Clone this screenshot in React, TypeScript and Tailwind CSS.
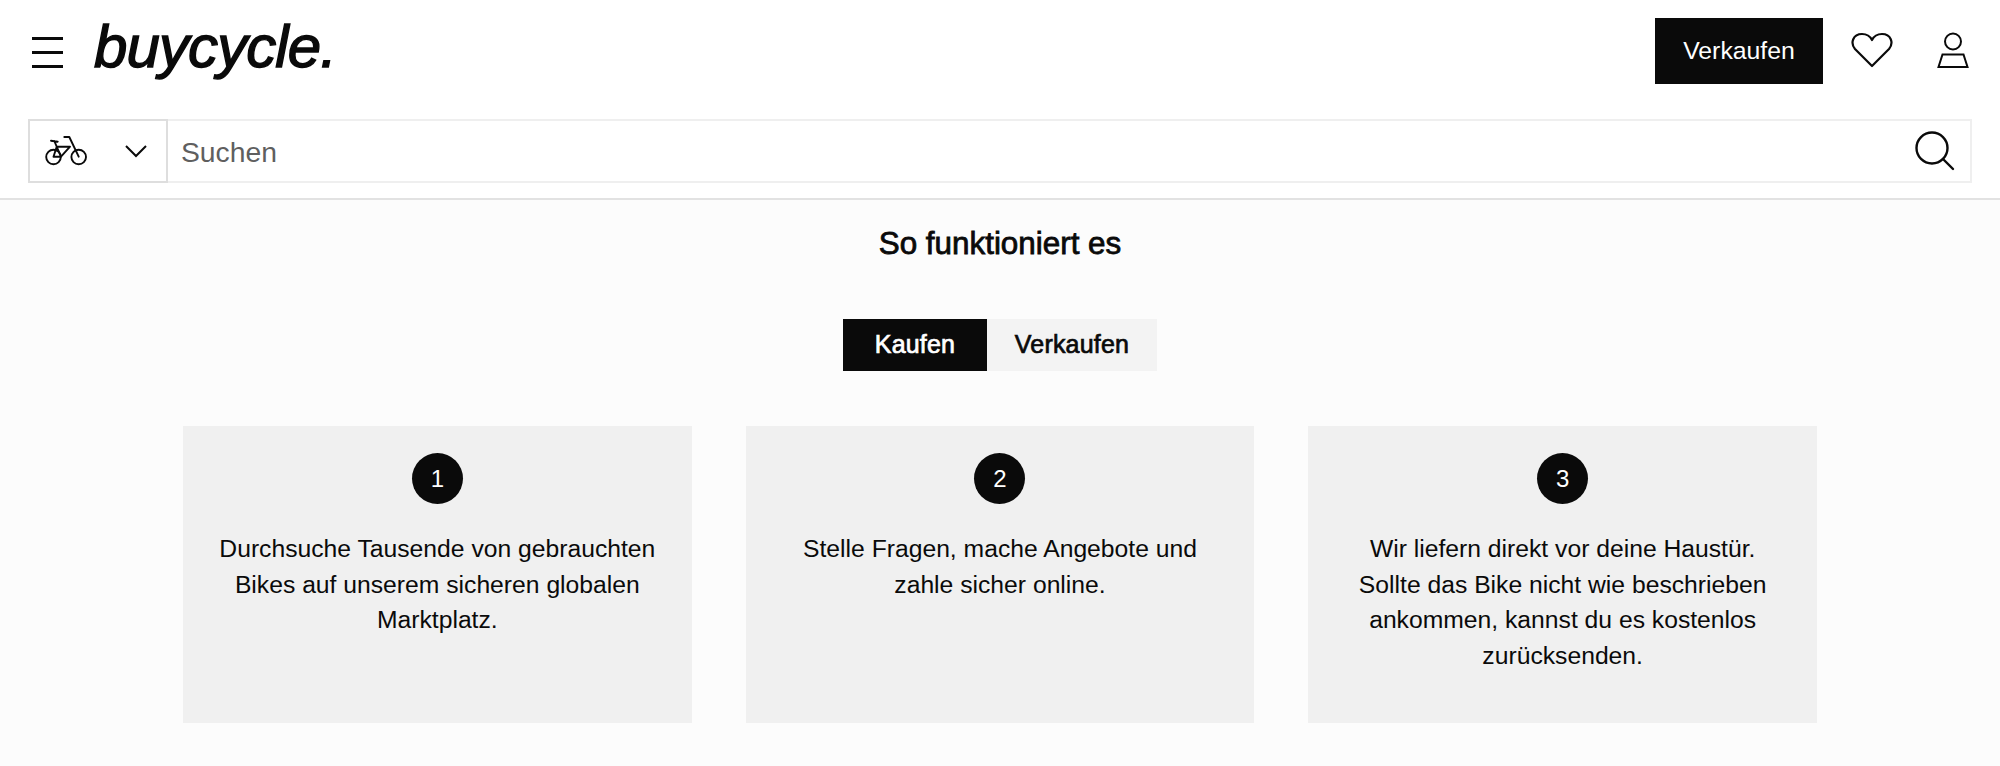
const steps = [
  { n: 1, text: "Durchsuche Tausende von gebrauchten Bikes auf unserem sicheren globalen Marktplatz." },
  { n: 2, text: "Stelle Fragen, mache Angebote und zahle sicher online." },
  { n: 3, text: "Wir liefern direkt vor deine Haustür. Sollte das Bike nicht wie beschrieben ankommen, kannst du es kostenlos zurücksenden." },
];

function BikeIcon() {
  return (
    <svg width="42" height="30" viewBox="0 0 42 30" fill="none" stroke="#0a0a0a" strokeWidth="1.9" strokeLinecap="round" strokeLinejoin="round">
      <circle cx="8.5" cy="21" r="7.3" />
      <circle cx="33.7" cy="21" r="7.3" />
      <path d="M19.3 1 H24.3 L33.7 20.7 M11.7 10.7 H25 L16 20.7 H8.5 L11.7 10.7 M6 4.7 L12.7 5.7 M9.3 5 L16 20.7" />
    </svg>
  );
}

function HeartIcon() {
  return (
    <svg width="42" height="36" viewBox="0 0 42 36" fill="none" stroke="#0a0a0a" strokeWidth="2.2" strokeLinejoin="round">
      <path d="M21 34 L4 17 C-1 11 2 2 11 2 C15.5 2 19 4 21 8 C23 4 26.5 2 31 2 C40 2 43 11 38 17 Z" />
    </svg>
  );
}

function UserIcon() {
  return (
    <svg width="32" height="37" viewBox="0 0 32 37" fill="none" stroke="#0a0a0a" strokeWidth="2">
      <circle cx="16" cy="9.5" r="8" />
      <path d="M5.5 22.5 H26.5 L30.5 35 H1.5 Z" />
    </svg>
  );
}

function SearchIcon() {
  return (
    <svg width="42" height="42" viewBox="0 0 42 42" fill="none" stroke="#0a0a0a" strokeWidth="2.4" strokeLinecap="round">
      <circle cx="18" cy="18" r="15.5" />
      <path d="M29 29 L39 39" />
    </svg>
  );
}

export default function App() {
  return (
    <div className="min-h-[766px] bg-[#fcfcfc] font-['Liberation_Sans',Arial,sans-serif] text-[#0a0a0a]">
      <header className="h-[200px] border-b-2 border-[#e2e2e2] bg-white">
        <div className="flex h-[119px] items-start pl-8 pr-[31px]">
          <div className="mt-[37px] flex h-[31px] w-[31px] flex-col justify-between">
            <span className="h-[3px] bg-[#0a0a0a]" />
            <span className="h-[3px] bg-[#0a0a0a]" />
            <span className="h-[3px] bg-[#0a0a0a]" />
          </div>
          <div className="ml-[31px] mt-[14px] text-[60px] leading-[66px] italic tracking-[-0.9px] [-webkit-text-stroke:1.4px_#0a0a0a]">
            buycycle.
          </div>
          <div className="ml-auto mt-[18px] flex items-start">
            <button className="flex h-[66px] w-[168px] items-center justify-center bg-[#0a0a0a] text-[24.8px] text-white">
              Verkaufen
            </button>
            <div className="ml-[28px] mt-[14px]">
              <HeartIcon />
            </div>
            <div className="ml-[44px] mt-[14px]">
              <UserIcon />
            </div>
          </div>
        </div>
        <div className="mx-[28px] flex h-[64px] bg-white">
          <div className="flex w-[140px] shrink-0 items-center justify-between border-2 border-[#dedede] pl-[15px] pr-[18px]">
            <BikeIcon />
            <svg width="24" height="14" viewBox="0 0 24 14" fill="none" stroke="#0a0a0a" strokeWidth="2">
              <path d="M2 2 L12 12 L22 2" />
            </svg>
          </div>
          <div className="flex flex-1 items-center justify-between border-y-2 border-r-2 border-[#efefef] pl-[13px] pr-[14px]">
            <span className="pt-[2px] text-[28.3px] text-[#5f5f5f]">Suchen</span>
            <SearchIcon />
          </div>
        </div>
      </header>

      <main className="flex flex-col items-center">
        <h2 className="mt-[24px] text-[31.4px] leading-[40px] font-normal tracking-[0px] [-webkit-text-stroke:0.8px_#0a0a0a]">
          So funktioniert es
        </h2>
        <div className="mt-[55px] flex h-[52px] text-[25px] font-normal tracking-[0.2px]">
          <button className="w-[144px] bg-[#0a0a0a] text-white [-webkit-text-stroke:0.7px_#ffffff]">Kaufen</button>
          <button className="w-[170px] bg-[#f3f3f3] [-webkit-text-stroke:0.7px_#0a0a0a]">Verkaufen</button>
        </div>
        <div className="mt-[55px] grid w-[1634px] grid-cols-3 gap-[54px]">
          {steps.map((step) => (
            <div key={step.n} className="flex h-[297px] flex-col items-center bg-[#f0f0f0] px-[28px] pt-[27px]">
              <div className="flex h-[51px] w-[51px] items-center justify-center rounded-full bg-[#0a0a0a] text-[24px] text-white">
                {step.n}
              </div>
              <p className="mt-[27px] text-center text-[24.7px] leading-[35.7px]">{step.text}</p>
            </div>
          ))}
        </div>
      </main>
    </div>
  );
}
